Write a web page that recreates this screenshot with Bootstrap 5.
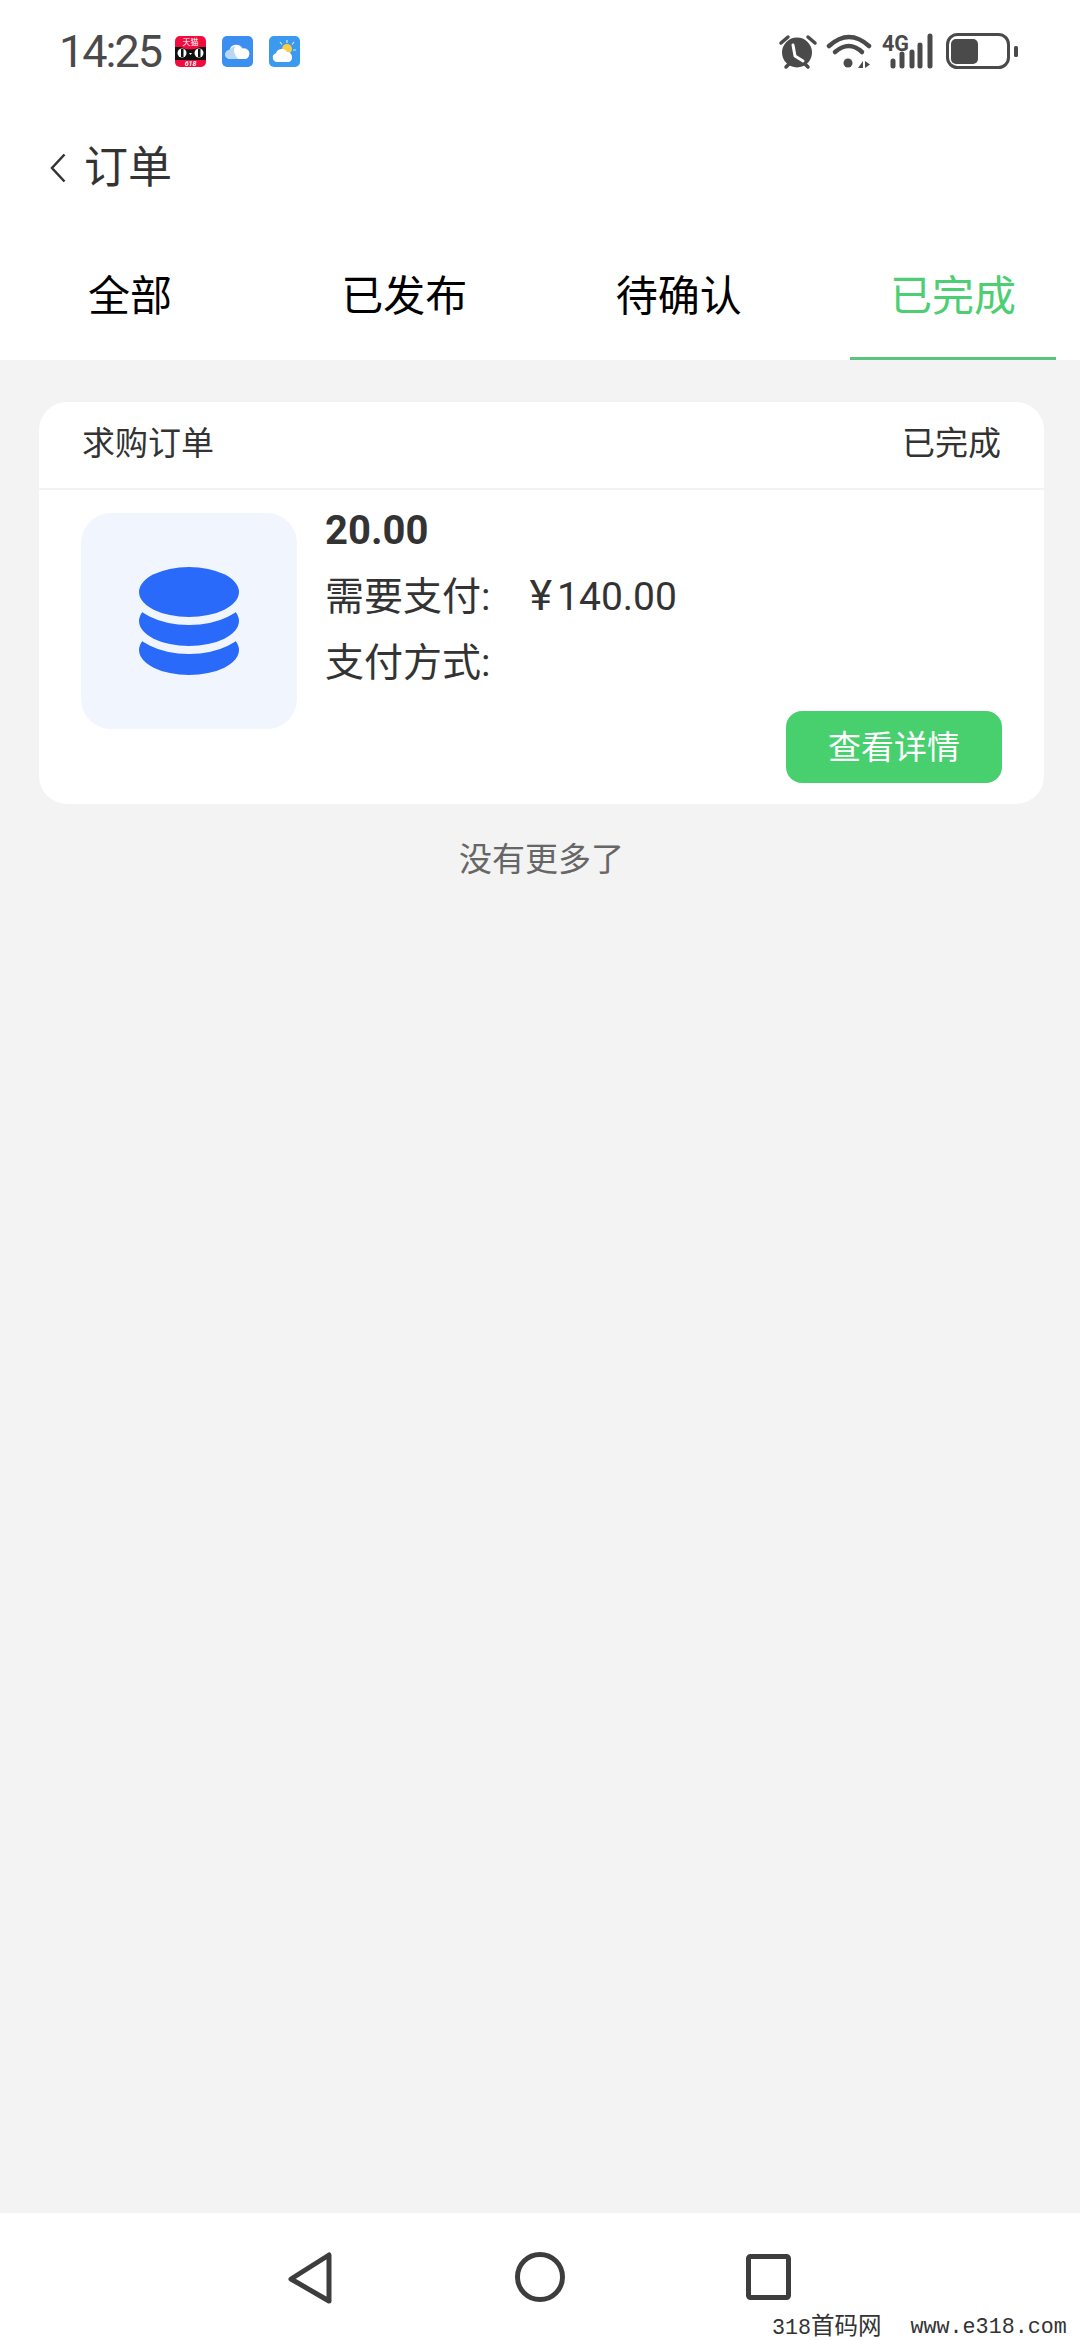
<!DOCTYPE html>
<html lang="zh-CN">
<head>
<meta charset="utf-8">
<title>订单</title>
<link rel="stylesheet" href="https://cdn.jsdelivr.net/npm/bootstrap@5.3.0/dist/css/bootstrap.min.css">
<style>
html,body{margin:0;background:#fff}
body{font-family:Roboto,"Noto Sans CJK SC",sans-serif;color:#333;width:1080px}
.page-shell{height:2340px;position:relative;overflow:hidden}
.status-strip{height:100px;padding:2px 62px 0 59px;color:#4a4a4a}
.clock{font-size:45px;line-height:1;font-family:Roboto,sans-serif;margin-right:14px;letter-spacing:-2px}
.app-dots{gap:16px}
.title-row{height:136px;padding-left:50px;gap:18px}
.title-text{font-size:44px;line-height:1;color:#333}
.tab-row{height:124px;padding:0 24px 0 27px;background:#fff}
.tab-row .nav-link{width:206px;height:124px;padding:0;display:flex;align-items:center;justify-content:center;font-size:42px;color:#000;border-bottom:3px solid transparent;border-radius:0}
.tab-row .nav-link.active{color:#4ccf72;border-bottom-color:#5ac47f}
.content-area{background:#f3f3f3;padding:42px 36px 0 39px}
.order-box{border:0;border-radius:28px;height:402px;background:#fff;color:#333}
.order-head{height:88px;padding:0 43px 3px;font-size:33px;line-height:1;border-bottom:2px solid #f3f3f3}
.order-body{padding:23px 42px 0;gap:28px;position:relative}
.thumb-box{width:216px;height:216px;border-radius:30px;background:#f1f6fe}
.amount{font-size:40px;font-weight:700;line-height:1;height:36px;display:flex;align-items:center}
.info-line{font-size:39px;line-height:66px;height:66px}
.info-first{margin-top:15px}
.pay-num{margin-left:39px}
.pay-yen{margin-right:5px;font-size:43px;line-height:1}
.detail-btn{width:216px;height:72px;border-radius:16px;background:#48d06e;color:#fff;border:0;font-size:33px;line-height:1;padding:0;position:absolute;right:42px;top:221px}
.end-note{font-size:33px;line-height:1;color:#666;text-align:center;margin-top:39px}
.bottom-nav{height:127px;background:#fff;padding:0 0 0 288px}
.watermark{position:absolute;left:772px;top:2315px;gap:29px;font-family:"Liberation Mono","Noto Sans CJK SC",monospace;font-size:21.700px;line-height:25px;color:#333;white-space:pre}
.wm-cjk{font-size:23.500px}
</style>
</head>
<body>
<div class="page-shell d-flex flex-column">
  <div class="status-strip d-flex align-items-center justify-content-between flex-shrink-0">
    <div class="d-flex align-items-center">
      <span class="clock">14:25</span>
      <div class="d-flex app-dots">
        <svg width="31" height="31" viewBox="0 0 31 31"><rect width="31" height="31" rx="5" fill="#f00d3e"/><path d="M0 11H6Q15 16 25 11H31V24H0Z" fill="#111"/><circle cx="7" cy="17" r="4.500" fill="#fff"/><circle cx="24" cy="17" r="4.500" fill="#fff"/><rect x="6" y="13" width="2.500" height="8" fill="#111"/><rect x="23" y="13" width="2.500" height="8" fill="#111"/><path d="M14 17h3l-1.500 2z" fill="#fff"/><text x="15.500" y="9" font-size="8" fill="#fff" text-anchor="middle" font-family="Noto Sans CJK SC">天猫</text><text x="15.500" y="30" font-size="7" font-weight="700" fill="#fff" text-anchor="middle" font-style="italic" font-family="Roboto">618</text></svg>
        <svg width="31" height="31" viewBox="0 0 31 31"><rect width="31" height="31" rx="5" fill="#3b8ff0"/><path d="M8 23a4.500 4.500 0 0 1-.5-9 7 7 0 0 1 13-1.500 5.300 5.300 0 0 1 3 10.500Z" fill="#fff"/><path d="M8 23a4.500 4.500 0 0 1-.5-9 7 7 0 0 1 6-3.500c-3 3-1 9 3 12.500Z" fill="#b9d8f8"/></svg>
        <svg width="31" height="31" viewBox="0 0 31 31"><rect width="31" height="31" rx="5" fill="#3b9af0"/><circle cx="18" cy="13" r="5" fill="#f9cf4a"/><path d="M18 4v3M11 6l2 2.500M25 6l-2 2.500M27 14h-3" stroke="#d8e8c8" stroke-width="1.200"/><path d="M8 26a4.500 4.500 0 0 1-1-8.800 6 6 0 0 1 11-1.200 5 5 0 0 1 5 5 5 5 0 0 1-3 5Z" fill="#fff"/></svg>
      </div>
    </div>
    <svg class="d-block" width="240" height="40" viewBox="0 0 240 40">
      <g fill="#4a4a4a" stroke="#4a4a4a">
        <circle cx="19" cy="21.500" r="15" stroke="none"/>
        <path d="M3 12l7-6M37 12l-7-6M8 36l4-4M30 36l-4-4" stroke-width="3.500" stroke-linecap="round" fill="none"/>
        <path d="M15 14l2 11 8 5" stroke="#fff" stroke-width="3" fill="none" stroke-linecap="round" stroke-linejoin="round"/>
        <g fill="none" stroke-width="4.500" stroke-linecap="round">
          <path d="M51 15q20-18 40 0"/>
          <path d="M57 21q14-12 27 0"/>
        </g>
        <circle cx="70" cy="32" r="4.500" stroke="none"/>
        <path d="M85 30v7h-5zM87 30v7l5-3.500z" stroke="none"/>
        <g stroke-width="5" stroke-linecap="round" fill="none">
          <path d="M115 30v5M124 23v12M134 21v14M142 14v21M152 5v30"/>
        </g>
        <text x="104" y="20" font-family="Roboto" font-weight="700" font-size="22" stroke="none" textLength="27" lengthAdjust="spacingAndGlyphs">4G</text>
        <rect x="169.500" y="3.500" width="61" height="33" rx="10" fill="none" stroke-width="3"/>
        <rect x="173" y="8" width="27" height="25" rx="5" stroke="none"/>
        <rect x="236" y="15" width="4" height="11" rx="1.500" stroke="none"/>
      </g>
    </svg>
  </div>

  <div class="title-row d-flex align-items-center flex-shrink-0">
    <svg width="16" height="30" viewBox="0 0 16 30"><path d="M14.500 1.500L2 15l12.500 13.500" fill="none" stroke="#333" stroke-width="2.500"/></svg>
    <span class="title-text">订单</span>
  </div>

  <nav class="tab-row nav d-flex justify-content-between flex-shrink-0">
    <a class="nav-link" href="#">全部</a>
    <a class="nav-link" href="#">已发布</a>
    <a class="nav-link" href="#">待确认</a>
    <a class="nav-link active" href="#">已完成</a>
  </nav>

  <main class="content-area flex-grow-1">
    <div class="card order-box">
      <div class="order-head d-flex justify-content-between align-items-center">
        <span>求购订单</span>
        <span>已完成</span>
      </div>
      <div class="order-body d-flex">
        <div class="thumb-box d-flex align-items-center justify-content-center flex-shrink-0">
          <svg width="100" height="108" viewBox="0 0 100 108">
            <ellipse cx="50" cy="83" rx="50" ry="25" fill="#2a6afb"/>
            <path d="M0 54a50 25 0 0 0 100 0" fill="none" stroke="#f1f6fe" stroke-width="16"/>
            <ellipse cx="50" cy="54" rx="50" ry="25" fill="#2a6afb"/>
            <path d="M0 25a50 25 0 0 0 100 0" fill="none" stroke="#f1f6fe" stroke-width="16"/>
            <ellipse cx="50" cy="25" rx="50" ry="25" fill="#2a6afb"/>
          </svg>
        </div>
        <div>
          <div class="amount">20.00</div>
          <div class="info-line info-first">需要支付:<span class="pay-num"><span class="pay-yen">¥</span>140.00</span></div>
          <div class="info-line">支付方式:</div>
        </div>
        <button type="button" class="btn detail-btn">查看详情</button>
      </div>
    </div>
    <div class="end-note">没有更多了</div>
  </main>

  <footer class="bottom-nav d-flex align-items-start flex-shrink-0">
    <svg class="nav-glyph" width="510" height="60" viewBox="0 0 510 60" style="margin-top:36px">
      <path d="M41 6v46L3 30Z" fill="none" stroke="#3d3d3d" stroke-width="5" stroke-linejoin="round"/>
      <circle cx="252" cy="28" r="22.500" fill="none" stroke="#3d3d3d" stroke-width="5"/>
      <rect x="460.500" y="7.500" width="40" height="41" rx="2" fill="none" stroke="#3d3d3d" stroke-width="5"/>
    </svg>
  </footer>
  <div class="watermark d-flex"><span>318<span class="wm-cjk">首码网</span></span><span>www.e318.com</span></div>
</div>
<script src="https://cdn.jsdelivr.net/npm/bootstrap@5.3.0/dist/js/bootstrap.bundle.min.js"></script>
</body>
</html>
